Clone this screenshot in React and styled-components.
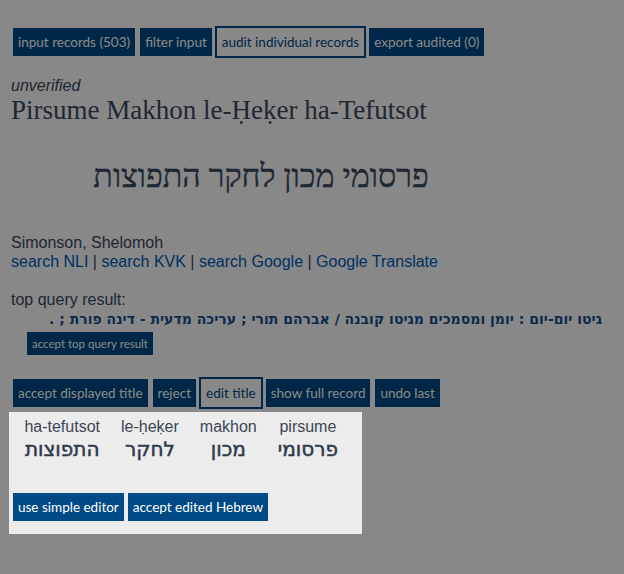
import styled, { createGlobalStyle, css } from 'styled-components'

const GlobalStyle = createGlobalStyle`
    body {
        margin: 8px;
        background: #ffffff;
        font-family: 'Liberation Sans', Arial, sans-serif;
        color: #3b4a5e;
    }
`

const Page = styled.div`
    padding: 0 3px;
`

const ButtonRow = styled.nav`
    display: flex;
    align-items: center;
    gap: 5px;
    padding: 0 2px;
    margin: ${(props) => props.$margin ?? '0'};
`

const Button = styled.button`
    height: 28px;
    padding: 0 5px;
    border: none;
    border-radius: 0;
    background: #004a86;
    color: #ffffff;
    font-family: Lato, 'Noto Sans', sans-serif;
    font-size: 13.5px;
    white-space: nowrap;
    ${(props) =>
        props.$active &&
        css`
            height: 32px;
            margin: 0 -2px;
            border: 2px solid #004a86;
            background: transparent;
            color: #004a86;
        `}
`

const SmallButton = styled(Button)`
    height: 23px;
    font-size: 11.5px;
    padding: 0 5px;
    margin-left: 16px;
    margin-top: 3px;
`

const Status = styled.div`
    margin-top: 19px;
    font-style: italic;
    font-size: 16px;
`

const Title = styled.h1`
    margin: 0;
    font-family: 'Liberation Serif', 'Times New Roman', serif;
    font-weight: normal;
    font-size: 27px;
    line-height: 30px;
`

const HebrewTitle = styled.div`
    direction: rtl;
    width: 500px;
    text-align: center;
    margin: 31px 0 37px;
    font-family: 'Liberation Serif', 'Times New Roman', serif;
    font-size: 32px;
    line-height: 40px;
    -webkit-text-stroke: 0.4px currentColor;
`

const Line = styled.div`
    font-size: 16px;
    line-height: 19px;
`

const Links = styled(Line)`
    a {
        color: #005cb8;
        text-decoration: none;
    }
`

const QueryLabel = styled(Line)`
    margin-top: 19px;
`

const QueryResult = styled.div`
    direction: rtl;
    padding-right: 11px;
    font-family: 'DejaVu Sans', sans-serif;
    font-weight: bold;
    font-size: 14px;
    line-height: 20px;
    color: #1b4f8c;
`

const Overlay = styled.div`
    position: fixed;
    inset: 0;
    background: rgba(0, 0, 0, 0.467);
`

const EditPanel = styled.section`
    position: absolute;
    left: 9px;
    top: 412px;
    width: 353px;
    height: 122px;
    box-sizing: border-box;
    padding: 5px 4px 0;
    background: #ececec;
`

const Words = styled.div`
    display: flex;
    direction: rtl;
    gap: 21px;
    padding-right: 20px;
    height: 76px;
`

const Word = styled.div`
    display: flex;
    flex-direction: column;
    align-items: center;
    white-space: nowrap;
`

const Latin = styled.span`
    direction: ltr;
    font-size: 16px;
    line-height: 19px;
    color: #3b4656;
`

const Hebrew = styled.span`
    font-family: 'DejaVu Sans', sans-serif;
    font-size: 20px;
    line-height: 26px;
    color: #2f3a4a;
    -webkit-text-stroke: 0.5px currentColor;
`

const PanelButtons = styled.div`
    display: flex;
    gap: 4px;
`

const words = [
    ['pirsume', 'פרסומי'],
    ['makhon', 'מכון'],
    ['le-ḥeḳer', 'לחקר'],
    ['ha-tefutsot', 'התפוצות'],
]

function App() {
    return (
        <>
            <GlobalStyle />
            <Page>
                <ButtonRow $margin="18px 0 0">
                    <Button>input records (503)</Button>
                    <Button>filter input</Button>
                    <Button $active>audit individual records</Button>
                    <Button>export audited (0)</Button>
                </ButtonRow>
                <Status>unverified</Status>
                <Title>Pirsume Makhon le-Ḥeḳer ha-Tefutsot</Title>
                <HebrewTitle>פרסומי מכון לחקר התפוצות</HebrewTitle>
                <Line>Simonson, Shelomoh</Line>
                <Links>
                    <a href="#">search NLI</a> | <a href="#">search KVK</a> |{' '}
                    <a href="#">search Google</a> | <a href="#">Google Translate</a>
                </Links>
                <QueryLabel>top query result:</QueryLabel>
                <QueryResult>
                    גיטו יום-יום : יומן ומסמכים מגיטו קובנה / אברהם תורי ; עריכה מדעית - דינה פורת ; .
                </QueryResult>
                <SmallButton>accept top query result</SmallButton>
                <ButtonRow $margin="22px 0 0">
                    <Button>accept displayed title</Button>
                    <Button>reject</Button>
                    <Button $active>edit title</Button>
                    <Button>show full record</Button>
                    <Button>undo last</Button>
                </ButtonRow>
            </Page>
            <Overlay />
            <EditPanel>
                <Words>
                    {words.map(([latin, hebrew]) => (
                        <Word key={latin}>
                            <Latin>{latin}</Latin>
                            <Hebrew>{hebrew}</Hebrew>
                        </Word>
                    ))}
                </Words>
                <PanelButtons>
                    <Button>use simple editor</Button>
                    <Button>accept edited Hebrew</Button>
                </PanelButtons>
            </EditPanel>
        </>
    )
}

export default App
